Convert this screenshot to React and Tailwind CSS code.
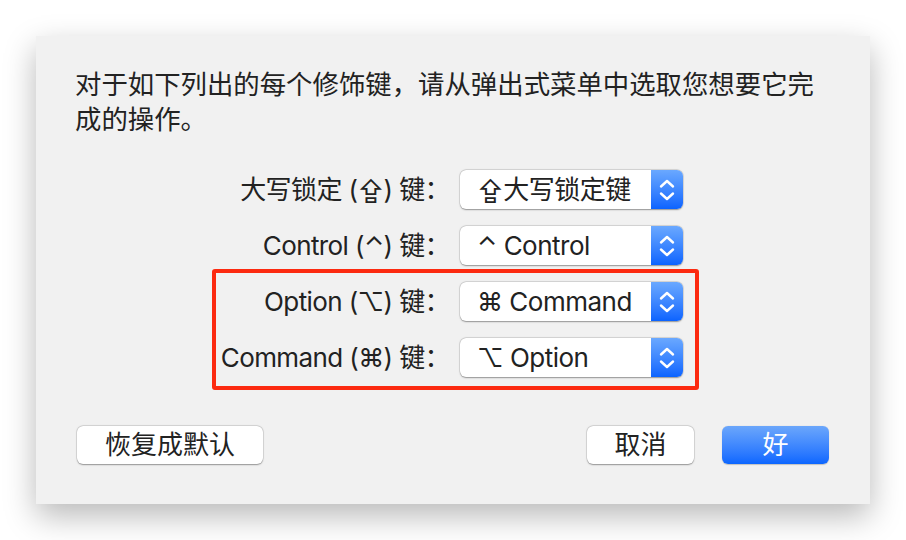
import React from 'react';

const font = { fontFamily: '"Inter", "Noto Sans CJK SC", "DejaVu Sans", sans-serif' };

const rows = [
  { label: '大写锁定 (⇪) 键：', value: '⇪大写锁定键' },
  { label: 'Control (⌃) 键：', value: '⌃ Control' },
  { label: 'Option (⌥) 键：', value: '⌘ Command' },
  { label: 'Command (⌘) 键：', value: '⌥ Option' },
];

const Stepper = () => (
  <div className="w-[32px] h-full flex items-center justify-center rounded-r-[6px] bg-gradient-to-b from-[#6aa8ff] to-[#0a63ff]">
    <svg width="16" height="24" viewBox="0 0 16 24" fill="none" stroke="white" strokeWidth="2.4" strokeLinecap="round" strokeLinejoin="round">
      <path d="M2 8.5 L8 3 L14 8.5" />
      <path d="M2 15.5 L8 21 L14 15.5" />
    </svg>
  </div>
);

const Popup = ({ value }) => (
  <div className="w-[223px] h-[39px] flex bg-white rounded-[6px] shadow-[0_0.5px_1.5px_rgba(0,0,0,0.35),0_0_0_0.5px_rgba(0,0,0,0.12)]">
    <div className="flex-1 flex items-center pl-[17px] text-[26px] tracking-[-0.5px] leading-none text-[#222]">{value}</div>
    <Stepper />
  </div>
);

const Button = ({ children, primary, w }) => (
  <button
    className={`h-[38px] ${w} rounded-[6px] text-[26px] leading-none flex items-center justify-center ${
      primary
        ? 'bg-gradient-to-b from-[#6ba6fb] to-[#0a66ff] text-white shadow-[0_0.5px_1px_rgba(0,0,0,0.2)]'
        : 'bg-white text-[#222] shadow-[0_0.5px_1.5px_rgba(0,0,0,0.35),0_0_0_0.5px_rgba(0,0,0,0.12)]'
    }`}
  >
    {children}
  </button>
);

export default function App() {
  return (
    <div className="w-[906px] h-[540px] bg-white pt-[36px] pl-[36px]" style={font}>
      <div className="w-[834px] h-[468px] bg-[#f1f1f1] shadow-[0_12px_30px_rgba(0,0,0,0.28)] flex flex-col pt-[31px] pb-[40px]">
        <p className="pl-[39px] w-[800px] text-[26.4px] leading-[35px] text-[#222]">
          对于如下列出的每个修饰键，请从弹出式菜单中选取您想要它完成的操作。
        </p>

        <div className="relative mt-[33px] ml-[161px] flex flex-col gap-[17px]">
          {rows.map((row) => (
            <div key={row.label} className="flex items-center gap-[10px]">
              <div className="w-[253px] text-right text-[26px] tracking-[-0.6px] leading-none text-[#222] whitespace-nowrap">{row.label}</div>
              <Popup value={row.value} />
            </div>
          ))}
          {/* red annotation box */}
          <div className="absolute left-[15px] top-[99px] w-[487px] h-[121px] border-[4px] border-[#fc2a10] rounded-[3px]" />
        </div>

        <div className="mt-auto flex items-center px-[41px]">
          <Button w="w-[186px]">恢复成默认</Button>
          <div className="flex-1" />
          <Button w="w-[107px]">取消</Button>
          <div className="w-[28px]" />
          <Button w="w-[107px]" primary>好</Button>
        </div>
      </div>
    </div>
  );
}
